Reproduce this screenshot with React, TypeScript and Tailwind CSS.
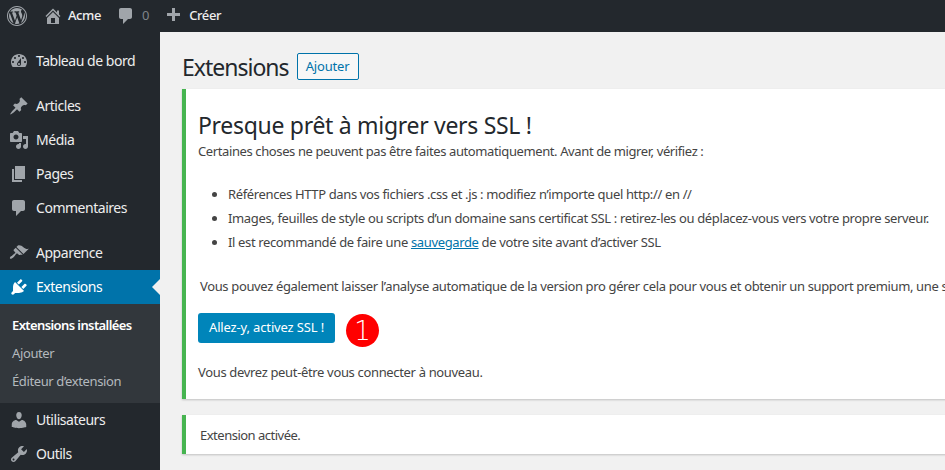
import React from 'react';

const font = { fontFamily: '"Noto Sans", sans-serif' };

const icons: Record<string, string> = {
  dashboard:
    'M3.76 16h12.48c1.1-1.37 1.76-3.11 1.76-5 0-4.42-3.58-8-8-8s-8 3.58-8 8c0 1.89.66 3.63 1.76 5zM10 4c.55 0 1 .45 1 1s-.45 1-1 1-1-.45-1-1 .45-1 1-1zM6 6c.55 0 1 .45 1 1s-.45 1-1 1-1-.45-1-1 .45-1 1-1zm8 0c.55 0 1 .45 1 1s-.45 1-1 1-1-.45-1-1 .45-1 1-1zm-5.37 5.55L12 7v6c0 1.1-.9 2-2 2s-2-.9-2-2c0-.57.24-1.08.63-1.45zM4 10c.55 0 1 .45 1 1s-.45 1-1 1-1-.45-1-1 .45-1 1-1zm12 0c.55 0 1 .45 1 1s-.45 1-1 1-1-.45-1-1 .45-1 1-1zm-5 3c0-.55-.45-1-1-1s-1 .45-1 1 .45 1 1 1 1-.45 1-1z',
  post:
    'M10.44 3.02l1.82-1.82 6.36 6.35-1.83 1.82c-1.05-.68-2.48-.57-3.41.36l-.75.75c-.92.93-1.04 2.35-.35 3.41l-1.83 1.82-2.41-2.41-2.8 2.79c-.42.42-3.38 2.71-3.8 2.29s1.86-3.39 2.28-3.81l2.79-2.79L4.1 9.36l1.83-1.82c1.05.69 2.48.57 3.4-.36l.75-.75c.93-.92 1.05-2.35.36-3.41z',
  media:
    'M13 11V4c0-.55-.45-1-1-1h-1.67L9 1H5L3.67 3H2c-.55 0-1 .45-1 1v7c0 .55.45 1 1 1h10c.55 0 1-.45 1-1zM7 4.5c1.38 0 2.5 1.12 2.5 2.5S8.38 9.5 7 9.5 4.5 8.38 4.5 7 5.62 4.5 7 4.5zM14 6h5v10.5c0 1.38-1.12 2.5-2.5 2.5S14 17.88 14 16.5s1.12-2.5 2.5-2.5c.17 0 .34.02.5.05V9h-3V6zm-4 8.05V13h2v3.5c0 1.38-1.12 2.5-2.5 2.5S7 17.88 7 16.5 8.12 14 9.5 14c.17 0 .34.02.5.05z',
  page: 'M6 15V2h10v13H6zm-1 1h8v2H3V5h2v11z',
  comment: 'M5 2h9c1.1 0 2 .9 2 2v7c0 1.1-.9 2-2 2h-2l-5 5v-5H5c-1.1 0-2-.9-2-2V4c0-1.1.9-2 2-2z',
  appearance:
    'M14.48 11.06L7.41 3.99l1.5-1.5c.5-.56 2.3-.47 3.51.32 1.21.8 1.43 1.28 2.91 2.1 1.18.64 2.45 1.26 4.45.85zm-.71.71L6.7 4.7 4.93 6.47c-.39.39-.39 1.02 0 1.41l1.06 1.06c.39.39.39 1.03 0 1.42-.6.6-1.43 1.11-2.21 1.69-.35.26-.7.53-1.01.84C1.43 13.23.4 14.91 1.08 15.59c.68.68 2.36-.35 3.7-1.69.31-.31.58-.66.85-1.01.57-.78 1.08-1.61 1.69-2.21.39-.39 1.02-.39 1.41 0l1.06 1.06c.39.39 1.02.39 1.41 0z',
  plugins:
    'M13.11 4.36L9.87 7.6 8 5.73l3.24-3.24c.35-.34 1.05-.2 1.56.32.52.51.66 1.21.31 1.55zm-8 1.77l.91-1.12 9.01 9.01-1.19.84c-.71.71-2.63 1.16-3.82 1.16H6.14L4.9 17.26c-.59.59-1.54.59-2.12 0-.59-.58-.59-1.53 0-2.12l1.24-1.24v-3.88c0-1.13.4-3.19 1.09-3.89zm7.26 3.97l3.24-3.24c.34-.35 1.04-.21 1.55.31.52.51.66 1.21.31 1.55l-3.24 3.25z',
  users:
    'M10 9.25c-2.27 0-2.73-3.44-2.73-3.44C7 4.02 7.82 2 9.97 2c2.16 0 2.98 2.02 2.71 3.81 0 0-.41 3.44-2.68 3.44zm0 2.57L12.72 10c2.39 0 4.52 2.33 4.52 4.53v2.49s-3.65 1.13-7.24 1.13c-3.65 0-7.24-1.13-7.24-1.13v-2.49c0-2.25 1.94-4.48 4.47-4.48z',
  tools:
    'M16.68 9.77c-1.34 1.34-3.3 1.67-4.95.99l-5.41 6.52c-.99.99-2.59.99-3.58 0s-.99-2.59 0-3.57l6.52-5.42c-.68-1.65-.35-3.61.99-4.95 1.28-1.28 3.12-1.62 4.72-1.06l-2.89 2.89 2.82 2.82 2.86-2.87c.53 1.58.18 3.39-1.08 4.67zM3.81 16.21c.4.39 1.04.39 1.43 0 .4-.4.4-1.04 0-1.43-.39-.4-1.03-.4-1.43 0-.39.39-.39 1.03 0 1.43z',
  home: 'M16 8.5l1.53 1.53-1.06 1.06L10 4.62l-6.47 6.47-1.06-1.06L10 2.5l4 4v-2h2v4zm-6-2.46l6 5.99V18H4v-5.97zM12 17v-5H8v5h4z',
  plus: 'M17 7v3h-5v5H9v-5H4V7h5V2h3v5h5z',
  wordpress:
    'M20 10c0-5.52-4.48-10-10-10S0 4.48 0 10s4.48 10 10 10 10-4.48 10-10zM10 1.01c4.96 0 8.99 4.03 8.99 8.99s-4.03 8.99-8.99 8.99S1.01 14.96 1.01 10 5.04 1.01 10 1.01zM8.01 14.82L4.96 6.61c.49-.03 1.05-.08 1.05-.08.43-.05.38-1.01-.06-.99 0 0-1.29.1-2.13.1-.15 0-.33 0-.52-.01 1.44-2.17 3.9-3.6 6.7-3.6 2.09 0 3.99.79 5.41 2.09-.6-.08-1.45.35-1.45 1.42 0 .66.38 1.22.79 1.88.31.54.5 1.22.5 2.21 0 1.34-1.27 4.48-1.27 4.48l-2.71-7.5c.48-.03.75-.16.75-.16.43-.05.38-1.1-.05-1.08 0 0-1.3.11-2.14.11-.78 0-2.11-.11-2.11-.11-.43-.02-.48 1.06-.05 1.08l.84.08 1.12 3.04zm6.02 2.15L16.64 10s.67-1.69.39-3.81c.63 1.14.94 2.42.94 3.81 0 2.96-1.56 5.58-3.94 7.09zM2.68 6.77L6.5 17.25c-2.67-1.3-4.47-4.04-4.47-7.25 0-1.18.2-2.26.65-3.23zm7.45 4.53l2.29 6.25c-.75.27-1.57.42-2.42.42-.72 0-1.41-.11-2.06-.3z',
};

const Dashicon = ({ name, className }: { name: string; className: string }) => (
  <svg viewBox="0 0 20 20" fill="currentColor" fillRule="evenodd" className={className}>
    <path d={icons[name]} />
  </svg>
);

const MenuItem = ({ icon, label, active }: { icon: string; label: string; active?: boolean }) => (
  <div
    className={`relative flex h-[34px] items-center text-[14px] tracking-[-0.47px] ${
      active ? 'bg-[#0073aa] text-white' : 'text-[#eeeeee]'
    }`}
  >
    <div className={`flex w-9 justify-center pl-[1px] ${active ? 'text-white' : 'text-[#a0a5aa]'}`}>
      <Dashicon name={icon} className="h-5 w-5" />
    </div>
    <span className="pb-[1px]">{label}</span>
    {active && (
      <div className="absolute right-0 top-[9px] h-0 w-0 border-y-[8px] border-r-[8px] border-y-transparent border-r-[#f1f1f1]" />
    )}
  </div>
);

const AdminBar = () => (
  <header className="flex h-8 items-center bg-[#23282d] text-[13px] tracking-[-0.4px] text-[#eeeeee]">
    <Dashicon name="wordpress" className="ml-[7px] h-[20px] w-[20px] text-[#a0a5aa]" />
    <Dashicon name="home" className="ml-4 h-[20px] w-[20px] text-[#a0a5aa]" />
    <span className="ml-[5px] font-medium">Acme</span>
    <Dashicon name="comment" className="ml-[15px] h-[20px] w-[20px] text-[#a0a5aa]" />
    <span className="ml-[6px] text-[#7f8489]">0</span>
    <Dashicon name="plus" className="ml-[14px] h-[20px] w-[20px] text-[#a0a5aa]" />
    <span className="ml-[6px] font-medium">Créer</span>
  </header>
);

const Sidebar = () => (
  <aside className="h-full w-40 shrink-0 bg-[#23282d] pt-3">
    <MenuItem icon="dashboard" label="Tableau de bord" />
    <div className="h-[11px]" />
    <MenuItem icon="post" label="Articles" />
    <MenuItem icon="media" label="Média" />
    <MenuItem icon="page" label="Pages" />
    <MenuItem icon="comment" label="Commentaires" />
    <div className="h-[11px]" />
    <MenuItem icon="appearance" label="Apparence" />
    <MenuItem icon="plugins" label="Extensions" active />
    <div className="h-[99px] bg-[#32373c] pl-3 pt-[8px] text-[13px] tracking-[-0.38px] text-[#b4b9be]">
      <div className="flex h-[28px] items-center font-semibold tracking-[-0.6px] text-white">Extensions installées</div>
      <div className="flex h-[28px] items-center">Ajouter</div>
      <div className="flex h-[28px] items-center">Éditeur d’extension</div>
    </div>
    <MenuItem icon="users" label="Utilisateurs" />
    <MenuItem icon="tools" label="Outils" />
  </aside>
);

const MainNotice = () => (
  <section className="mt-[9px] h-[310px] w-[900px] border-l-4 border-[#46b450] bg-white pl-3 pt-[20px] shadow-[0_1px_2px_rgba(0,0,0,0.2)]">
    <h2 className="text-[23px] leading-[32px] tracking-[-0.3px] text-[#23282d]">Presque prêt à migrer vers SSL !</h2>
    <p className="text-[13px] leading-[20px] tracking-[-0.39px]">
      Certaines choses ne peuvent pas être faites automatiquement. Avant de migrer, vérifiez :
    </p>
    <ul className="mt-[21px] list-disc pl-[30px] text-[13px] leading-[24px] tracking-[-0.36px] marker:text-[#444]">
      <li>Références HTTP dans vos fichiers .css et .js : modifiez n’importe quel http:// en //</li>
      <li>Images, feuilles de style ou scripts d’un domaine sans certificat SSL : retirez-les ou déplacez-vous vers votre propre serveur.</li>
      <li>
        Il est recommandé de faire une <a className="text-[#0073aa] underline">sauvegarde</a> de votre site avant d’activer SSL
      </li>
    </ul>
    <p className="mt-[22px] pl-[2px] text-[13px] leading-[20px] tracking-[-0.36px]">
      Vous pouvez également laisser l’analyse automatique de la version pro gérer cela pour vous et obtenir un support premium, une solution
    </p>
    <div className="mt-[17px] flex items-start gap-[11px]">
      <button className="h-[30px] w-[137px] rounded-[3px] bg-[#0085ba] text-[13px] tracking-[-0.15px] text-white">Allez-y, activez SSL !</button>
      <div className="mt-[1px] flex h-[33px] w-[33px] items-center justify-center rounded-full bg-[#ff0000] font-['DejaVu_Sans'] text-[26px] font-extralight leading-none text-white">1</div>
    </div>
    <p className="mt-[15px] text-[13px] leading-[20px] tracking-[-0.34px]">Vous devrez peut-être vous connecter à nouveau.</p>
  </section>
);

export default function App() {
  return (
    <div className="flex h-[470px] w-[945px] flex-col overflow-hidden whitespace-nowrap bg-[#f1f1f1] text-[#444444]" style={font}>
      <AdminBar />
      <div className="flex min-h-0 flex-1">
        <Sidebar />
        <main className="pl-[22px] pt-[21px]">
          <div className="flex h-[27px] items-center">
            <h1 className="mt-[2px] text-[23px] tracking-[-1px] text-[#23282d]">Extensions</h1>
            <button className="ml-[8px] h-[27px] w-[62px] rounded-[2px] border border-[#0073aa] bg-[#f7f7f7] text-[13px] tracking-[-0.2px] text-[#0073aa]">Ajouter</button>
          </div>
          <MainNotice />
          <section className="mt-[16px] flex h-[39px] w-[900px] items-center border-l-4 border-[#46b450] bg-white pl-[14px] pt-[2px] text-[13px] tracking-[-0.5px] shadow-[0_1px_2px_rgba(0,0,0,0.2)]">
            Extension activée.
          </section>
        </main>
      </div>
    </div>
  );
}
